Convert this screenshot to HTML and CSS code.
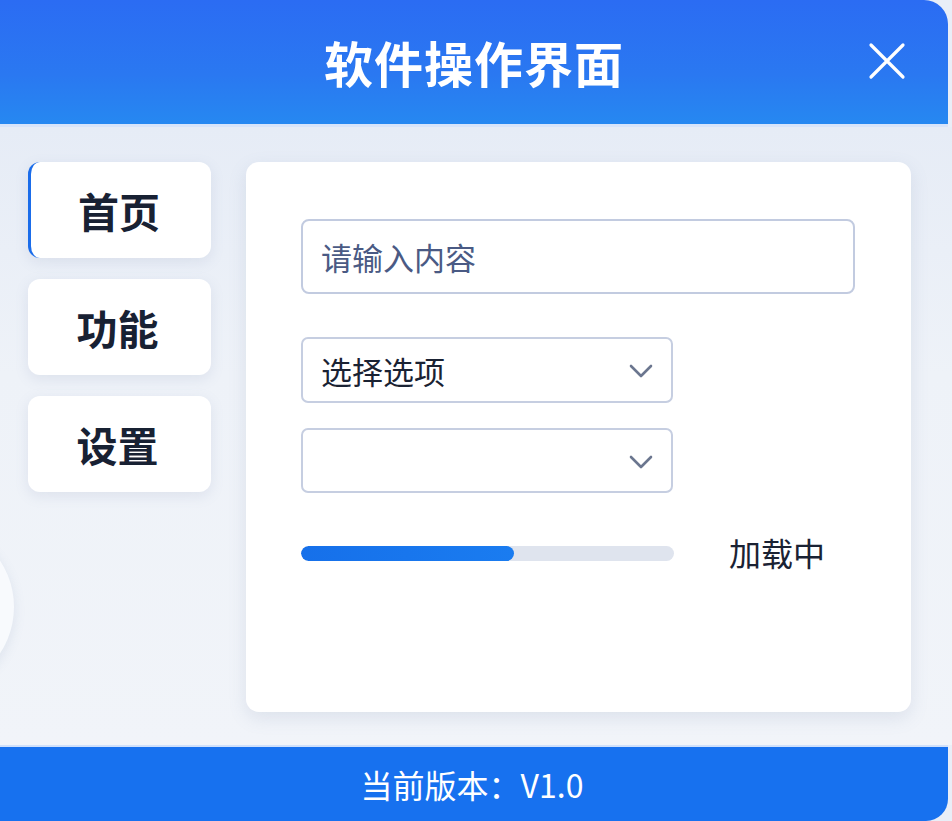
FILE: index.html
```html
<!DOCTYPE html>
<html lang="zh-CN">
<head>
<meta charset="utf-8">
<title>软件操作界面</title>
<link rel="stylesheet" href="styles.css">
</head>
<body>
<div class="app">
  <header class="header">
    <div></div>
    <h1 class="title">软件操作界面</h1>
    <button class="close" aria-label="关闭">
      <svg width="40" height="40" viewBox="0 0 40 40"><path d="M4 4 L36 36 M36 4 L4 36" stroke="#fff" stroke-width="3.2" stroke-linecap="round" fill="none"/></svg>
    </button>
  </header>
  <main class="body">
    <div class="blob"></div>
    <nav class="sidebar">
      <div class="nav-item active">首页</div>
      <div class="nav-item">功能</div>
      <div class="nav-item">设置</div>
    </nav>
    <section class="card">
      <div class="input">请输入内容</div>
      <div class="select first">
        <span>选择选项</span>
        <svg class="chev" width="24" height="14" viewBox="0 0 24 14"><path d="M2 2 L12 12 L22 2" stroke="#6b768f" stroke-width="2.6" fill="none" stroke-linecap="round" stroke-linejoin="round"/></svg>
      </div>
      <div class="select second">
        <span></span>
        <svg class="chev" width="24" height="14" viewBox="0 0 24 14"><path d="M2 2 L12 12 L22 2" stroke="#6b768f" stroke-width="2.6" fill="none" stroke-linecap="round" stroke-linejoin="round"/></svg>
      </div>
      <div class="progress-row">
        <div class="track"><div class="fill" style="width:57%"></div></div>
        <span class="loading">加载中</span>
      </div>
    </section>
  </main>
  <footer class="footer">当前版本：V1.0</footer>
</div>
</body>
</html>
```
FILE: styles.css
```css
* { box-sizing: border-box; }
html, body {
  margin: 0;
  padding: 0;
  background: #e9eef7;
  font-family: "Noto Sans CJK SC", "Noto Sans", sans-serif;
}
.app {
  width: 952px;
  height: 821px;
  display: flex;
  flex-direction: column;
  overflow: hidden;
}
.header {
  height: 127px;
  flex: none;
  background: linear-gradient(180deg, #2b6cf3 0%, #2a78f1 60%, #2688f1 100%);
  border-top-right-radius: 24px;
  margin-right: 4px;
  border-bottom: 3px solid #d7e4fa;
  display: grid;
  grid-template-columns: 1fr auto 1fr;
  align-items: center;
}
.title {
  margin: 0;
  color: #fff;
  font-size: 49px;
  font-weight: 700;
  letter-spacing: 1px;
  padding-bottom: 2px;
}
.close {
  justify-self: end;
  margin-right: 41px;
  background: none;
  border: 0;
  padding: 0;
  width: 40px;
  height: 40px;
  display: flex;
  margin-bottom: 2px;
}
.body {
  flex: 1;
  position: relative;
  display: flex;
  align-items: flex-start;
  gap: 35px;
  padding: 35px 0 0 28px;
  background: linear-gradient(180deg, #e6ecf6 0%, #eef2f8 40%, #f1f4f9 100%);
}
.blob {
  position: absolute;
  left: -154px;
  top: 396px;
  width: 168px;
  height: 168px;
  border-radius: 50%;
  background: #f8fafd;
  box-shadow: 0 4px 12px rgba(120, 140, 180, 0.16);
}
.sidebar {
  width: 183px;
  display: flex;
  flex-direction: column;
  gap: 21px;
}
.nav-item {
  height: 96px;
  background: #fff;
  border-radius: 12px;
  box-shadow: 0 4px 14px rgba(110, 130, 170, 0.14);
  display: flex;
  align-items: center;
  justify-content: center;
  font-size: 41px;
  font-weight: 700;
  color: #182133;
  padding-right: 4px;
}
.nav-item.active {
  border-left: 3px solid #1a6cea;
}
.card {
  width: 665px;
  height: 550px;
  background: #fff;
  border-radius: 13px;
  box-shadow: 0 6px 18px rgba(110, 130, 170, 0.16);
  padding: 57px 0 0 55px;
  display: flex;
  flex-direction: column;
}
.input {
  width: 554px;
  height: 75px;
  border: 2px solid #c2cbe0;
  border-radius: 8px;
  display: flex;
  align-items: center;
  padding-left: 18px;
  font-size: 31px;
  color: #4a5a84;
}
.select {
  width: 372px;
  border: 2px solid #c6cee1;
  border-radius: 7px;
  display: flex;
  align-items: center;
  justify-content: space-between;
  padding: 0 18px 0 18px;
  font-size: 31px;
  color: #1a2233;
}
.select.first {
  height: 66px;
  margin-top: 43px;
}
.select.second {
  height: 65px;
  margin-top: 25px;
}
.chev { margin-top: 2px; }
.progress-row {
  margin-top: 38px;
  display: flex;
  align-items: center;
  gap: 55px;
}
.track {
  width: 373px;
  height: 15px;
  border-radius: 8px;
  background: #dfe4ee;
  overflow: hidden;
}
.fill {
  height: 100%;
  border-radius: 8px;
  background: linear-gradient(90deg, #1670ea, #1a7cf0);
}
.loading {
  font-size: 32px;
  color: #1a2233;
  margin-top: -2px;
}
.footer {
  height: 76px;
  flex: none;
  background: #1771ef;
  border-top: 2px solid #cfe0fb;
  border-bottom-right-radius: 22px;
  margin-right: 4px;
  display: flex;
  align-items: center;
  justify-content: center;
  color: #fff;
  font-size: 32px;
  padding-right: 4px;
}
```
